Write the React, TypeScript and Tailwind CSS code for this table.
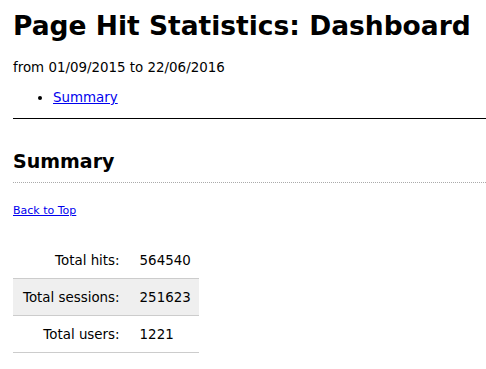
const stats = [
  { label: 'Total hits:', value: '564540' },
  { label: 'Total sessions:', value: '251623' },
  { label: 'Total users:', value: '1221' },
];

export default function App() {
  return (
    <div className="min-h-screen bg-white pl-[13px] text-black font-['DejaVu_Sans',Verdana,sans-serif]">
      <h1 className="pt-[10px] text-[26.5px] leading-[32px] font-bold">
        Page Hit Statistics: Dashboard
      </h1>

      <p className="mt-[18px] text-[13.4px] leading-[16px]">
        from 01/09/2015 to 22/06/2016
      </p>

      <ul className="mt-[14px] ml-[40px] list-disc text-[13.4px] leading-[16px]">
        <li>
          <a href="#summary" className="text-[#0000ee] underline">
            Summary
          </a>
        </li>
      </ul>

      <hr className="mt-[12px] border-t border-black" />

      <h2 id="summary" className="mt-[31px] text-[19px] leading-[22px] font-bold">
        Summary
      </h2>
      <div className="mt-[10px] border-t border-dotted border-[#aaaaaa]" />

      <p className="mt-[22px] text-[11px] leading-[12px]">
        <a href="#" className="text-[#0000ee] underline">
          Back to Top
        </a>
      </p>

      <table className="mt-[24px] border-collapse text-[13.4px]">
        <tbody>
          {stats.map((s, i) => (
            <tr
              key={s.label}
              className={`h-[37px] border-b border-[#cccccc] ${i === 1 ? 'bg-[#efefef]' : ''}`}
            >
              <td className="px-[10px] pt-[3px] text-right whitespace-nowrap">{s.label}</td>
              <td className="pl-[10px] pr-[8px] pt-[3px] text-left">{s.value}</td>
            </tr>
          ))}
        </tbody>
      </table>
    </div>
  );
}
